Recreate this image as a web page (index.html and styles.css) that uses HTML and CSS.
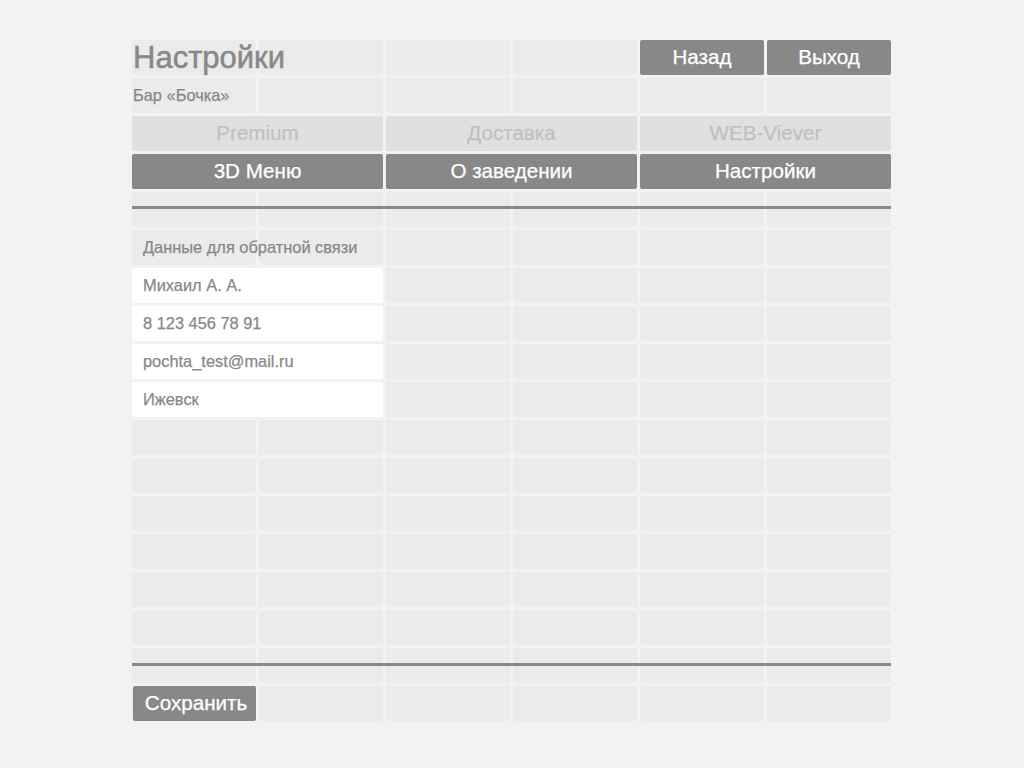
FILE: index.html
```html
<!DOCTYPE html>
<html lang="ru">
<head>
<meta charset="utf-8">
<title>Настройки</title>
<link rel="stylesheet" href="styles.css">
</head>
<body>
<div class="board">
  <div class="bg-grid">
    <div class="c"></div><div class="c"></div><div class="c"></div><div class="c"></div><div class="c"></div><div class="c"></div>
    <div class="c"></div><div class="c"></div><div class="c"></div><div class="c"></div><div class="c"></div><div class="c"></div>
    <div class="c"></div><div class="c"></div><div class="c"></div><div class="c"></div><div class="c"></div><div class="c"></div>
    <div class="c"></div><div class="c"></div><div class="c"></div><div class="c"></div><div class="c"></div><div class="c"></div>
    <div class="c"></div><div class="c"></div><div class="c"></div><div class="c"></div><div class="c"></div><div class="c"></div>
    <div class="c"></div><div class="c"></div><div class="c"></div><div class="c"></div><div class="c"></div><div class="c"></div>
    <div class="c"></div><div class="c"></div><div class="c"></div><div class="c"></div><div class="c"></div><div class="c"></div>
    <div class="c"></div><div class="c"></div><div class="c"></div><div class="c"></div><div class="c"></div><div class="c"></div>
    <div class="c"></div><div class="c"></div><div class="c"></div><div class="c"></div><div class="c"></div><div class="c"></div>
    <div class="c"></div><div class="c"></div><div class="c"></div><div class="c"></div><div class="c"></div><div class="c"></div>
    <div class="c"></div><div class="c"></div><div class="c"></div><div class="c"></div><div class="c"></div><div class="c"></div>
    <div class="c"></div><div class="c"></div><div class="c"></div><div class="c"></div><div class="c"></div><div class="c"></div>
    <div class="c"></div><div class="c"></div><div class="c"></div><div class="c"></div><div class="c"></div><div class="c"></div>
    <div class="c"></div><div class="c"></div><div class="c"></div><div class="c"></div><div class="c"></div><div class="c"></div>
    <div class="c"></div><div class="c"></div><div class="c"></div><div class="c"></div><div class="c"></div><div class="c"></div>
    <div class="c"></div><div class="c"></div><div class="c"></div><div class="c"></div><div class="c"></div><div class="c"></div>
    <div class="c"></div><div class="c"></div><div class="c"></div><div class="c"></div><div class="c"></div><div class="c"></div>
    <div class="c"></div><div class="c"></div><div class="c"></div><div class="c"></div><div class="c"></div><div class="c"></div>
  </div>
  <div class="content">
    <h1 class="title">Настройки</h1>
    <div class="btn btn-back">Назад</div>
    <div class="btn btn-exit">Выход</div>
    <div class="subtitle">Бар «Бочка»</div>

    <div class="tab tab-off tab-a">Premium</div>
    <div class="tab tab-off tab-b">Доставка</div>
    <div class="tab tab-off tab-c">WEB-Viever</div>

    <div class="tab tab-on tab-d">3D Меню</div>
    <div class="tab tab-on tab-e">О заведении</div>
    <div class="tab tab-on tab-f">Настройки</div>

    <div class="rule rule-top"></div>

    <div class="label">Данные для обратной связи</div>
    <div class="field f1">Михаил А. А.</div>
    <div class="field f2">8 123 456 78 91</div>
    <div class="field f3">pochta_test@mail.ru</div>
    <div class="field f4">Ижевск</div>

    <div class="rule rule-bottom"></div>

    <div class="btn btn-save">Сохранить</div>
  </div>
</div>
</body>
</html>
```

FILE: styles.css
```css
html, body {
  margin: 0;
  padding: 0;
  background: #f2f2f2;
}

body {
  font-family: "Liberation Sans", Arial, sans-serif;
  color: #888888;
  padding-top: 40px;
}

.board {
  width: 759px;
  margin-left: 132px;
  display: grid;
}

.bg-grid,
.content {
  grid-area: 1 / 1;
  display: grid;
  grid-template-columns: repeat(6, 1fr);
  grid-template-rows: repeat(18, 35px);
  gap: 3px;
}

.c {
  background: #ebebeb;
  border-radius: 2px;
}

.content > * {
  margin: 0;
  -webkit-text-stroke: 0.25px currentColor;
}

.title {
  grid-row: 1;
  grid-column: 1 / 4;
  font-size: 31px;
  font-weight: normal;
  line-height: 35px;
  margin-left: 1px;
  white-space: nowrap;
  -webkit-text-stroke: 0.5px currentColor;
}

.subtitle {
  grid-row: 2;
  grid-column: 1 / 3;
  font-size: 16.4px;
  line-height: 35px;
  margin-left: 1px;
}

.btn {
  background: #888888;
  color: #ffffff;
  border-radius: 2px;
  font-size: 20.6px;
  line-height: 33px;
  padding-bottom: 2px;
  text-align: center;
}

.btn-back { grid-row: 1; grid-column: 5; }
.btn-exit { grid-row: 1; grid-column: 6; }
.btn-save { grid-row: 18; grid-column: 1; margin-left: 1px; padding-left: 3px; }

.tab {
  border-radius: 2px;
  font-size: 20.6px;
  line-height: 33px;
  padding-bottom: 2px;
  text-align: center;
}

.tab-off {
  background: #e0e0e0;
  color: #c0c0c0;
  grid-row: 3;
}

.tab-on {
  background: #888888;
  color: #ffffff;
  grid-row: 4;
}

.tab-a, .tab-d { grid-column: 1 / 3; }
.tab-b, .tab-e { grid-column: 3 / 5; }
.tab-c, .tab-f { grid-column: 5 / 7; }

.rule {
  grid-column: 1 / -1;
  height: 3px;
  background: #888888;
  align-self: start;
}

.rule-top { grid-row: 5; margin-top: 14px; }
.rule-bottom { grid-row: 17; margin-top: 15px; }

.label {
  grid-row: 6;
  grid-column: 1 / 3;
  font-size: 16.4px;
  line-height: 35px;
  padding-left: 11px;
}

.field {
  grid-column: 1 / 3;
  background: #ffffff;
  font-size: 16.4px;
  line-height: 35px;
  padding-left: 11px;
}

.f1 { grid-row: 7; }
.f2 { grid-row: 8; }
.f3 { grid-row: 9; }
.f4 { grid-row: 10; }
```
